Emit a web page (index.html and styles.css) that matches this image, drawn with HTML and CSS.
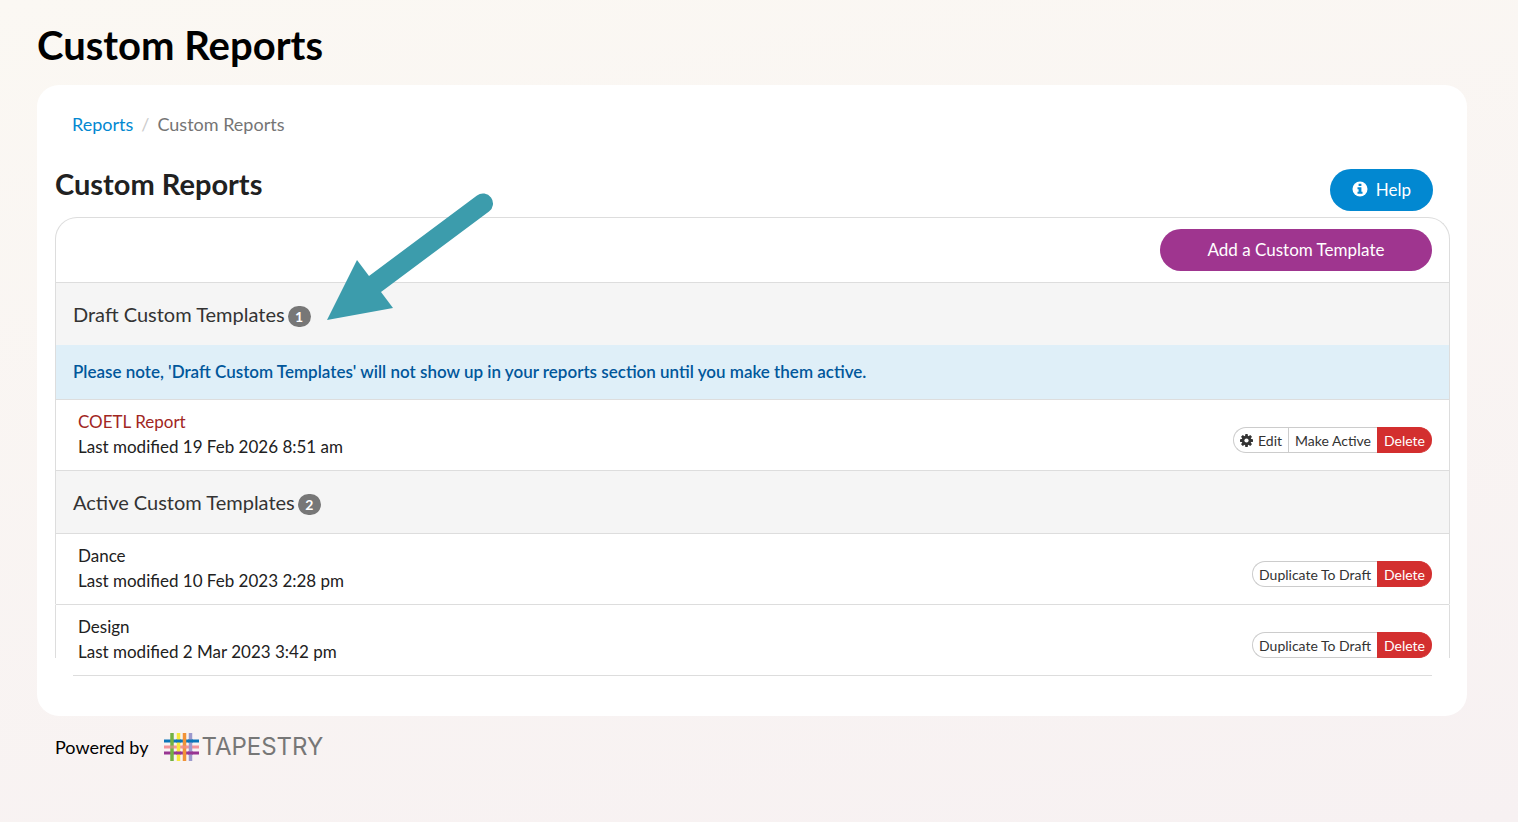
FILE: index.html
```html
<!DOCTYPE html>
<html lang="en">
<head>
  <meta charset="UTF-8">
  <meta name="viewport" content="width=device-width, initial-scale=1">
  <title>Custom Reports</title>
  <link rel="stylesheet" href="styles.css">
</head>
<body>
  <h1>Custom Reports</h1>

  <main class="card">
    <nav class="breadcrumb" aria-label="Breadcrumb">
      <a href="#">Reports</a>
      <span class="divider">/</span>
      <span>Custom Reports</span>
    </nav>

    <div class="section-header">
      <h2>Custom Reports</h2>
      <button class="btn btn-help" type="button">
        <svg width="16" height="16" viewBox="0 0 16 16" aria-hidden="true">
          <circle cx="8" cy="8" r="7.5" fill="#fff"/>
          <path d="M6.6 2.8h2.8v2.2H6.6zM5.5 6.3h3.9v4.5h1.1v1.9h-5v-1.9h1.1V8.2H5.5z" fill="#0288d1"/>
        </svg>
        Help
      </button>
    </div>

    <div class="panel">
      <div class="toolbar">
        <button class="btn btn-add" type="button">Add a Custom Template</button>
      </div>

      <h3 class="group-title">Draft Custom Templates <span class="badge">1</span></h3>
      <p class="notice">Please note, 'Draft Custom Templates' will not show up in your reports section until you make them active.</p>
      <div class="row">
        <div class="details">
          <a class="draft-name" href="#">COETL Report</a>
          <p>Last modified 19 Feb 2026 8:51 am</p>
        </div>
        <div class="btn-group">
          <button type="button">
            <svg width="13" height="13" viewBox="0 0 16 16" aria-hidden="true">
              <g fill="#333">
                <rect x="6.3" y="0" width="3.4" height="16" rx="0.6"/>
                <rect x="6.3" y="0" width="3.4" height="16" rx="0.6" transform="rotate(45 8 8)"/>
                <rect x="6.3" y="0" width="3.4" height="16" rx="0.6" transform="rotate(90 8 8)"/>
                <rect x="6.3" y="0" width="3.4" height="16" rx="0.6" transform="rotate(135 8 8)"/>
                <circle cx="8" cy="8" r="6"/>
              </g>
              <circle cx="8" cy="8" r="2.6" fill="#fff"/>
            </svg>
            Edit
          </button>
          <button type="button">Make Active</button>
          <button class="delete" type="button">Delete</button>
        </div>
      </div>

      <h3 class="group-title">Active Custom Templates <span class="badge">2</span></h3>
      <div class="row">
        <div class="details">
          <p>Dance</p>
          <p>Last modified 10 Feb 2023 2:28 pm</p>
        </div>
        <div class="btn-group">
          <button type="button">Duplicate To Draft</button>
          <button class="delete" type="button">Delete</button>
        </div>
      </div>
      <div class="row row-last">
        <div class="details">
          <p>Design</p>
          <p>Last modified 2 Mar 2023 3:42 pm</p>
        </div>
        <div class="btn-group">
          <button type="button">Duplicate To Draft</button>
          <button class="delete" type="button">Delete</button>
        </div>
      </div>

      <!-- pointer to the draft list -->
      <svg class="arrow" width="168" height="130" viewBox="0 0 168 130" aria-hidden="true">
        <path d="M0 128 30 68 42 84 150 3.500A10 10 0 0 1 162 19.500L54 100 66 116z" fill="#3c9cac"/>
      </svg>
    </div>
  </main>

  <footer>
    <span>Powered by</span>
    <a class="logo" href="#">
      <svg width="35" height="28" viewBox="0 0 35 28" aria-hidden="true">
        <path d="M0 8h35" stroke="#0b75b9" stroke-width="3"/>
        <path d="M0 14h35" stroke="#f3949b" stroke-width="3"/>
        <path d="M0 20h35" stroke="#983592" stroke-width="3"/>
        <path d="M8 0v28" stroke="#72b143" stroke-width="3.500"/>
        <path d="M14.500 0v28" stroke="#f7e83c" stroke-width="3.500"/>
        <path d="M20.500 0v28" stroke="#f19338" stroke-width="3.500"/>
        <path d="M26.500 0v28" stroke="#9c99cd" stroke-width="3.500"/>
        <path d="M12 8h5M24 8h5" stroke="#0b75b9" stroke-width="3"/>
        <path d="M6 14h4M18 14h5" stroke="#f3949b" stroke-width="3" opacity="0.600"/>
        <path d="M12 20h5M24 20h5" stroke="#983592" stroke-width="3"/>
      </svg>
      <span>TAPESTRY</span>
    </a>
  </footer>
</body>
</html>
```
FILE: styles.css
```css
* {
  box-sizing: border-box;
}

body {
  margin: 0;
  padding: 21px 51px 0 37px;
  min-height: 100vh;
  font-family: Lato, sans-serif;
  font-size: 18px;
  line-height: 26px;
  color: #212121;
  background: linear-gradient(170deg, #fbf8f3, #f7f1f2);
}

h1, h2, h3, p {
  margin: 0;
}

h1 {
  font-size: 40px;
  line-height: 48px;
  margin-bottom: 16px;
  color: #000;
}

a {
  color: #0288d1;
  text-decoration: none;
}

button {
  font-family: inherit;
  cursor: pointer;
}

.card {
  padding: 26px 17px 40px 18px;
  background: #fff;
  border-radius: 22px;
}

.breadcrumb {
  display: flex;
  gap: 8px;
  padding: 0 17px;
  color: #757575;
}

.breadcrumb .divider {
  color: #ccc;
}

.section-header {
  display: flex;
  justify-content: space-between;
  margin-top: 32px;
  padding-right: 17px;
}

h2 {
  font-size: 29px;
  line-height: 30px;
}

.btn {
  height: 42px;
  padding: 0 22px 2px;
  border: 0;
  border-radius: 21px;
  color: #fff;
  font-size: 17px;
}

.btn-help {
  display: flex;
  align-items: center;
  gap: 8px;
  background: #0288d1;
}

.btn-add {
  width: 272px;
  background: #9f358f;
}

.panel {
  position: relative;
  margin-top: 6px;
}

.toolbar {
  display: flex;
  justify-content: flex-end;
  padding: 11px 17px;
  border: 1px solid #ddd;
  border-bottom: 0;
  border-radius: 22px 22px 0 0;
}

.group-title {
  display: flex;
  align-items: center;
  gap: 3px;
  height: 63px;
  padding: 0 17px;
  border: 1px solid #ddd;
  border-bottom: 0;
  background: #f5f5f5;
  color: #333;
  font-size: 20px;
  font-weight: 400;
}

.badge {
  min-width: 23px;
  margin-top: 4px;
  border-radius: 11px;
  background: #777;
  color: #fff;
  font-size: 14px;
  font-weight: 700;
  line-height: 21px;
  text-align: center;
}

.notice {
  padding: 14px 17px;
  border: 1px solid #ddd;
  border-width: 0 1px;
  background: #dfeff8;
  color: #01579b;
  font-size: 17px;
  font-weight: 600;
}

.row {
  display: flex;
  justify-content: space-between;
  align-items: flex-end;
  padding: 9px 17px 11px 22px;
  border: 1px solid #ddd;
  border-bottom: 0;
  font-size: 17px;
  line-height: 25px;
}

/* open corners: the side lines stop before the bottom line */
.row-last {
  border-color: #ddd transparent transparent;
  border-bottom: 1px solid transparent;
  background:
    linear-gradient(#ddd, #ddd) left top / 1px calc(100% - 18px) no-repeat border-box,
    linear-gradient(#ddd, #ddd) right top / 1px calc(100% - 18px) no-repeat border-box,
    linear-gradient(#ddd, #ddd) center bottom / calc(100% - 36px) 1px no-repeat border-box;
}

.draft-name {
  color: #a12622;
}

.btn-group {
  display: flex;
  margin-bottom: 6px;
}

.btn-group button {
  display: flex;
  align-items: center;
  gap: 5px;
  height: 26px;
  padding: 0 6px;
  border: 1px solid #ccc;
  border-right: 0;
  background: #fff;
  color: #333;
  font-size: 14px;
}

.btn-group button:first-child {
  border-radius: 13px 0 0 13px;
}

.btn-group .delete {
  padding-right: 7px;
  border-color: #d32f2f;
  border-radius: 0 13px 13px 0;
  background: #d32f2f;
  color: #fff;
}

.arrow {
  position: absolute;
  left: 272px;
  top: -25px;
}

footer {
  display: flex;
  align-items: center;
  gap: 16px;
  padding: 17px 18px;
  color: #000;
}

.logo {
  display: flex;
  align-items: center;
  gap: 2px;
  color: #777;
  font-family: Inter, sans-serif;
  font-size: 24px;
}
```
